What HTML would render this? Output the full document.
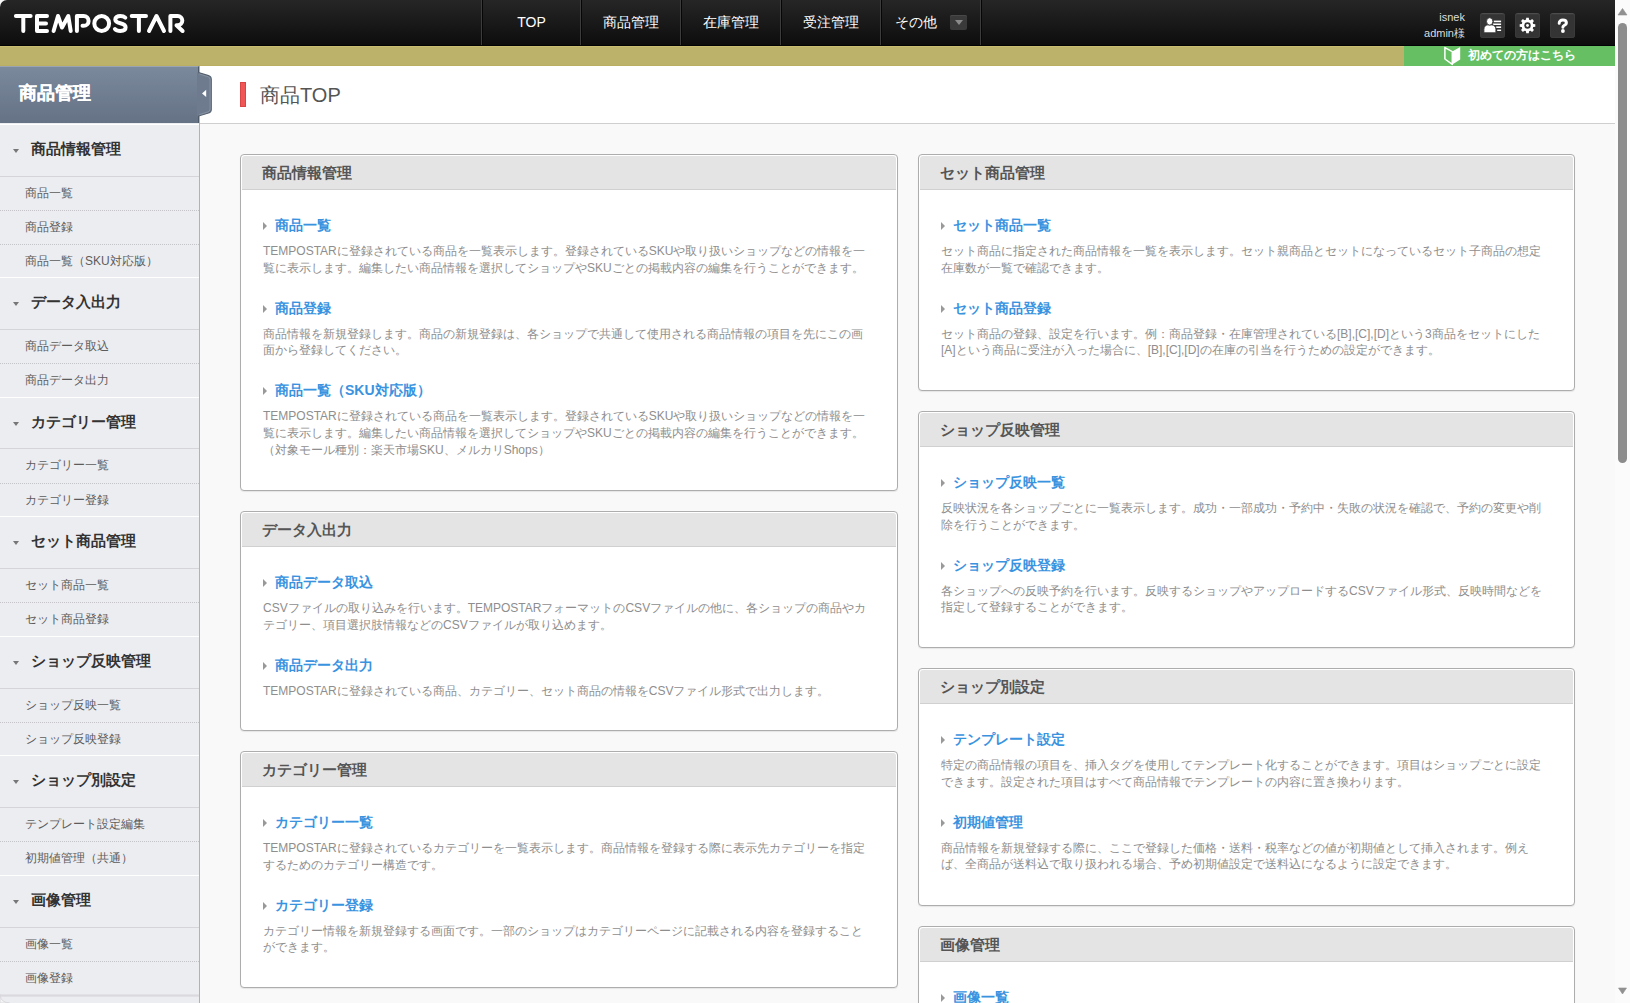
<!DOCTYPE html>
<html><head><meta charset="utf-8">
<style>
*{box-sizing:border-box;margin:0;padding:0}
html,body{width:1630px;height:1003px;overflow:hidden;background:#f9f9f9}
body{font-family:"Liberation Sans",sans-serif;position:relative}
.abs{position:absolute}
#hdr{left:0;top:0;width:1615px;height:46px;background:linear-gradient(#262626,#0d0d0d 97%,#030305 97%);border-top-left-radius:7px}
#gold{left:0;top:46px;width:1615px;height:20px;background:#bdb26a;border-top:1px solid #c8bd70;border-bottom:1px solid #b9ae62}
#green{left:1404px;top:46px;width:211px;height:20px;background:#66bf62}
#green span{position:absolute;left:64px;top:0;line-height:18px;font-size:12px;font-weight:bold;color:#fff;white-space:nowrap}
.nav{position:absolute;top:0;height:45px;width:100px;border-left:1px solid #3c3c3c;color:#fff;font-size:14px;line-height:45px;text-align:center;white-space:nowrap}
.nav:before{content:"";position:absolute;left:0;top:0;width:1px;height:45px;background:#060606}
.user{position:absolute;right:150px;font-size:11px;color:#ddd;white-space:nowrap;text-align:right}
.ibtn{position:absolute;top:13px;width:25px;height:25px;background:#343434;border-radius:3px;border-top:1px solid #4c4c4c;box-shadow:inset 0 0 0 1px #3a3a3a}
#sb{left:0;top:66px;width:200px;height:937px;background:#ecedf1;border-right:1px solid #b2b2b6}
#sbh{left:0;top:66px;width:199px;height:57px;background:linear-gradient(#7b899c,#657286);border-top:1px solid #9aa4b2;border-right:1px solid #4f5a69}
#sbh span{position:absolute;left:19px;top:0;line-height:53px;-webkit-text-stroke:0.3px #fff;font-size:18px;font-weight:bold;color:#fff;white-space:nowrap;text-shadow:0 0 1px rgba(0,0,0,.2)}
#ttl{left:200px;top:66px;width:1415px;height:58px;background:#fff;border-bottom:1px solid #cfcfcf}
#content{left:200px;top:124px;width:1415px;height:879px;background:#f9f9f9}
#scroll{left:1615px;top:0;width:15px;height:1003px;background:#fbfbfb}
#side{left:0;top:124px;width:199px}
.sec{border-top:1px solid #fff}
.sh{position:relative;height:51.8px;border-bottom:1px solid #d4d4d9;font-size:15px;font-weight:bold;color:#333;padding-left:31px;line-height:48px;white-space:nowrap}
.sh:before{content:"";position:absolute;left:13px;top:24px;border-left:3.5px solid transparent;border-right:3.5px solid transparent;border-top:4px solid #777}
.it{height:33.4px;line-height:33px;font-size:12px;color:#5c5c5c;padding-left:25px;white-space:nowrap}
.it+.it{border-top:1px dotted #c4c4c8}
.pnl{position:absolute;background:#fff;border:1px solid #adadad;border-radius:4px;padding:1px;box-shadow:0 1px 1px rgba(0,0,0,.08)}
.L{left:240px;width:658px}
.R{left:918px;width:657px}
.ph{height:34px;background:#e4e4e4;border-bottom:1px solid #d0d0d0;border-radius:3px 3px 0 0;font-size:15px;font-weight:bold;color:#555;padding-left:20px;line-height:33px;white-space:nowrap}
.pb{padding:26px 20px 0 21px}
.item{margin-bottom:22px}
.lk{position:relative;height:20px;line-height:18px;font-size:14px;font-weight:bold;color:#3a93df;padding-left:12px;white-space:nowrap}
.lk:before{content:"";position:absolute;left:0;top:6px;border-left:4.5px solid #999;border-top:4px solid transparent;border-bottom:4px solid transparent}
.ds{margin-top:7px;font-size:12px;line-height:16.8px;color:#8e8e8e;white-space:nowrap}
</style></head><body>
<div class="abs" id="content"></div>
<div class="abs" id="hdr">
  <svg class="abs" style="left:0;top:0" width="200" height="45" viewBox="0 0 200 45" fill="none" stroke="#fff" stroke-width="4" stroke-linecap="round" stroke-linejoin="round">
    <path d="M15.9 16H30.6M23.3 16V31"/>
    <path d="M47 16H37V31H47M37 23.5H46"/>
    <path d="M53.6 31L58 16L62 27.5L68.3 16L70.7 31"/>
    <path d="M76.9 31V16H83.7A4.9 4.9 0 0 1 83.7 25.8H82.5"/>
    <circle cx="101.7" cy="23.5" r="7.4"/>
    <path d="M125.3 17.6C124 16.4 122.3 16 120.3 16C117.3 16 115.3 17.4 115.3 19.6C115.3 21.8 117.3 22.6 120.3 23.3C123.3 24 125.6 25 125.6 27.3C125.6 29.7 123.4 31 120.4 31C118 31 116 30.3 114.9 29"/>
    <path d="M131.7 16H146M138.9 16V31"/>
    <path d="M149 31L156.5 16L164 31"/>
    <path d="M170.4 31V16H177.7A4.6 4.6 0 0 1 177.7 25.2H176.5L182.6 31"/>
  </svg>
  <div class="nav" style="left:481px">TOP</div>
  <div class="nav" style="left:580px">商品管理</div>
  <div class="nav" style="left:680px">在庫管理</div>
  <div class="nav" style="left:780px">受注管理</div>
  <div class="nav" style="left:880px;text-align:left;padding-left:14px">その他<span class="abs" style="left:69px;top:15px;width:17px;height:15px;background:#3a3a3a;border-radius:2px;box-shadow:inset 0 1px 0 #484848"><span class="abs" style="left:4.5px;top:5px;border-left:4px solid transparent;border-right:4px solid transparent;border-top:5px solid #8a8a8a"></span></span></div>
  <div class="nav" style="left:980px;width:1px"></div>
  <div class="user" style="top:10px;line-height:14px">isnek</div>
  <div class="user" style="top:26px;line-height:14px">admin様</div>
  <div class="ibtn" style="left:1480px">
    <svg class="abs" style="left:-1px;top:-1px" width="25" height="25" viewBox="0 0 25 25" fill="#fff">
      <rect x="14.7" y="7.6" width="7.4" height="1.6"/><rect x="14" y="10.5" width="8.1" height="1.5"/><rect x="17.2" y="13.4" width="4.9" height="1.6"/><rect x="18.2" y="16.6" width="3.9" height="1.4"/>
      <path d="M4.9 19.8V16.3C4.9 13.6 6.6 11.9 8.6 11.9H12.9C15.2 11.9 16.9 13.6 16.9 16.3V19.8Z" stroke="#333" stroke-width="0.9"/>
      <ellipse cx="10.7" cy="8.4" rx="3.2" ry="3.7" stroke="#333" stroke-width="0.9"/>
    </svg>
  </div>
  <div class="ibtn" style="left:1515px">
    <svg class="abs" style="left:-1px;top:-1px" width="25" height="25" viewBox="0 0 25 25">
      <g fill="#fff" transform="translate(13.5 12.5)">
        <circle r="5.9"/>
        <path d="M-1.3 -7.8H1.3L1.8 -4H-1.8Z"/>
        <path d="M-1.3 -7.8H1.3L1.8 -4H-1.8Z" transform="rotate(45)"/>
        <path d="M-1.3 -7.8H1.3L1.8 -4H-1.8Z" transform="rotate(90)"/>
        <path d="M-1.3 -7.8H1.3L1.8 -4H-1.8Z" transform="rotate(135)"/>
        <path d="M-1.3 -7.8H1.3L1.8 -4H-1.8Z" transform="rotate(180)"/>
        <path d="M-1.3 -7.8H1.3L1.8 -4H-1.8Z" transform="rotate(225)"/>
        <path d="M-1.3 -7.8H1.3L1.8 -4H-1.8Z" transform="rotate(270)"/>
        <path d="M-1.3 -7.8H1.3L1.8 -4H-1.8Z" transform="rotate(315)"/>
      </g>
      <circle cx="13.5" cy="12.5" r="3.2" fill="#333"/>
      <circle cx="13.5" cy="12.5" r="1.45" fill="#fff"/>
    </svg>
  </div>
  <div class="ibtn" style="left:1550px">
    <svg class="abs" style="left:-1px;top:-1px" width="25" height="25" viewBox="0 0 25 25">
      <path d="M10.2 10.2C10.2 8.2 11.7 7.1 13.8 7.1C15.9 7.1 17.4 8.2 17.4 9.9C17.4 12.2 13.9 12.4 13.9 14.1V14.2" fill="none" stroke="#fff" stroke-width="3" stroke-linecap="round"/>
      <circle cx="13.9" cy="18" r="1.9" fill="#fff"/>
    </svg>
  </div>
</div>
<div class="abs" id="gold"></div>
<div class="abs" id="green">
  <svg class="abs" style="left:40px;top:0" width="18" height="20" viewBox="0 0 18 20">
    <path d="M0.9 1.6L8.3 5.6V18.4L0.9 13Z" fill="none" stroke="#fff" stroke-width="1.5" stroke-linejoin="round"/>
    <path d="M8.3 5.6L16.2 1V13.6L8.3 18.6Z" fill="#fff"/>
  </svg>
  <span>初めての方はこちら</span>
</div>
<div class="abs" id="sb"></div>
<div class="abs" id="sbh"><span>商品管理</span></div>

<div class="abs" id="ttl"></div>
<svg class="abs" style="left:197px;top:70px" width="18" height="50" viewBox="0 0 18 50">
  <path d="M0 2.6H1.5L11.5 5.6Q14.3 6.6 14.3 9.2V39.4Q14.3 42 11.5 43L1.5 46H0Z" fill="#6e7b8e"/>
  <path d="M1.5 2.6L11.5 5.6Q14.3 6.6 14.3 9.2V39.4Q14.3 42 11.5 43L1.5 46" fill="none" stroke="#56616f" stroke-width="1.1"/>
  <path d="M2.2 3.9L11 6.7Q13.1 7.4 13.1 9.5V39.1Q13.1 41.2 11 41.9L2.2 44.7" fill="none" stroke="#8e99a9" stroke-width="0.8"/>
  <path d="M9.2 19.7V27.1L5 23.4Z" fill="#fff"/>
</svg>
<div class="abs" style="left:240px;top:82px;width:6px;height:25px;background:#f05656;box-shadow:inset 0 0 0 1px #d94444"></div>
<div class="abs" style="left:260px;top:80px;font-size:20px;line-height:30px;color:#555;white-space:nowrap">商品TOP</div>

<div class="abs" id="side">
  <div class="sec"><div class="sh">商品情報管理</div><div class="it">商品一覧</div><div class="it">商品登録</div><div class="it">商品一覧（SKU対応版）</div></div>
  <div class="sec"><div class="sh">データ入出力</div><div class="it">商品データ取込</div><div class="it">商品データ出力</div></div>
  <div class="sec"><div class="sh">カテゴリー管理</div><div class="it">カテゴリー一覧</div><div class="it">カテゴリー登録</div></div>
  <div class="sec"><div class="sh">セット商品管理</div><div class="it">セット商品一覧</div><div class="it">セット商品登録</div></div>
  <div class="sec"><div class="sh">ショップ反映管理</div><div class="it">ショップ反映一覧</div><div class="it">ショップ反映登録</div></div>
  <div class="sec"><div class="sh">ショップ別設定</div><div class="it">テンプレート設定編集</div><div class="it">初期値管理（共通）</div></div>
  <div class="sec"><div class="sh">画像管理</div><div class="it">画像一覧</div><div class="it">画像登録</div></div>
  <div style="height:3px;background:linear-gradient(#e6e6ea,#d9d9de 50%,#e4e4e8)"></div>
</div>


<div class="pnl L" style="top:154px;height:337px"><div class="ph">商品情報管理</div><div class="pb">
<div class="item"><div class="lk">商品一覧</div><div class="ds">TEMPOSTARに登録されている商品を一覧表示します。登録されているSKUや取り扱いショップなどの情報を一<br>覧に表示します。編集したい商品情報を選択してショップやSKUごとの掲載内容の編集を行うことができます。</div></div>
<div class="item"><div class="lk">商品登録</div><div class="ds">商品情報を新規登録します。商品の新規登録は、各ショップで共通して使用される商品情報の項目を先にこの画<br>面から登録してください。</div></div>
<div class="item"><div class="lk">商品一覧（SKU対応版）</div><div class="ds">TEMPOSTARに登録されている商品を一覧表示します。登録されているSKUや取り扱いショップなどの情報を一<br>覧に表示します。編集したい商品情報を選択してショップやSKUごとの掲載内容の編集を行うことができます。<br>（対象モール種別：楽天市場SKU、メルカリShops）</div></div>
</div></div>
<div class="pnl L" style="top:511px;height:220px"><div class="ph">データ入出力</div><div class="pb">
<div class="item"><div class="lk">商品データ取込</div><div class="ds">CSVファイルの取り込みを行います。TEMPOSTARフォーマットのCSVファイルの他に、各ショップの商品やカ<br>テゴリー、項目選択肢情報などのCSVファイルが取り込めます。</div></div>
<div class="item"><div class="lk">商品データ出力</div><div class="ds">TEMPOSTARに登録されている商品、カテゴリー、セット商品の情報をCSVファイル形式で出力します。</div></div>
</div></div>
<div class="pnl L" style="top:751px;height:237px"><div class="ph">カテゴリー管理</div><div class="pb">
<div class="item"><div class="lk">カテゴリー一覧</div><div class="ds">TEMPOSTARに登録されているカテゴリーを一覧表示します。商品情報を登録する際に表示先カテゴリーを指定<br>するためのカテゴリー構造です。</div></div>
<div class="item"><div class="lk">カテゴリー登録</div><div class="ds">カテゴリー情報を新規登録する画面です。一部のショップはカテゴリーページに記載される内容を登録すること<br>ができます。</div></div>
</div></div>
<div class="pnl R" style="top:154px;height:237px"><div class="ph">セット商品管理</div><div class="pb">
<div class="item"><div class="lk">セット商品一覧</div><div class="ds">セット商品に指定された商品情報を一覧を表示します。セット親商品とセットになっているセット子商品の想定<br>在庫数が一覧で確認できます。</div></div>
<div class="item"><div class="lk">セット商品登録</div><div class="ds">セット商品の登録、設定を行います。例：商品登録・在庫管理されている[B],[C],[D]という3商品をセットにした<br>[A]という商品に受注が入った場合に、[B],[C],[D]の在庫の引当を行うための設定ができます。</div></div>
</div></div>
<div class="pnl R" style="top:411px;height:237px"><div class="ph">ショップ反映管理</div><div class="pb">
<div class="item"><div class="lk">ショップ反映一覧</div><div class="ds">反映状況を各ショップごとに一覧表示します。成功・一部成功・予約中・失敗の状況を確認で、予約の変更や削<br>除を行うことができます。</div></div>
<div class="item"><div class="lk">ショップ反映登録</div><div class="ds">各ショップへの反映予約を行います。反映するショップやアップロードするCSVファイル形式、反映時間などを<br>指定して登録することができます。</div></div>
</div></div>
<div class="pnl R" style="top:668px;height:238px"><div class="ph">ショップ別設定</div><div class="pb">
<div class="item"><div class="lk">テンプレート設定</div><div class="ds">特定の商品情報の項目を、挿入タグを使用してテンプレート化することができます。項目はショップごとに設定<br>できます。設定された項目はすべて商品情報でテンプレートの内容に置き換わります。</div></div>
<div class="item"><div class="lk">初期値管理</div><div class="ds">商品情報を新規登録する際に、ここで登録した価格・送料・税率などの値が初期値として挿入されます。例え<br>ば、全商品が送料込で取り扱われる場合、予め初期値設定で送料込になるように設定できます。</div></div>
</div></div>
<div class="pnl R" style="top:926px;height:200px"><div class="ph">画像管理</div><div class="pb">
<div class="item"><div class="lk">画像一覧</div><div class="ds">&nbsp;</div></div>
</div></div>


<svg class="abs" style="left:0;top:993px" width="12" height="10" viewBox="0 0 12 10"><path d="M0 1.5Q0.5 9.5 9.5 10H0Z" fill="#f4f4f6" stroke="#d6d6da" stroke-width="0.8"/></svg>
<div class="abs" id="scroll">
  <svg class="abs" style="left:0;top:0" width="15" height="1003" viewBox="0 0 15 1003">
    <path d="M3 15H12L7.5 8.5Z" fill="#909090" stroke="#909090" stroke-width="0.6" stroke-linejoin="round"/>
    <rect x="3" y="23" width="9" height="440" rx="4.5" fill="#8c8c8c"/>
    <path d="M3.5 988H11.5L7.5 994Z" fill="#909090" stroke="#909090" stroke-width="0.6" stroke-linejoin="round"/>
  </svg>
</div>
</body></html>
